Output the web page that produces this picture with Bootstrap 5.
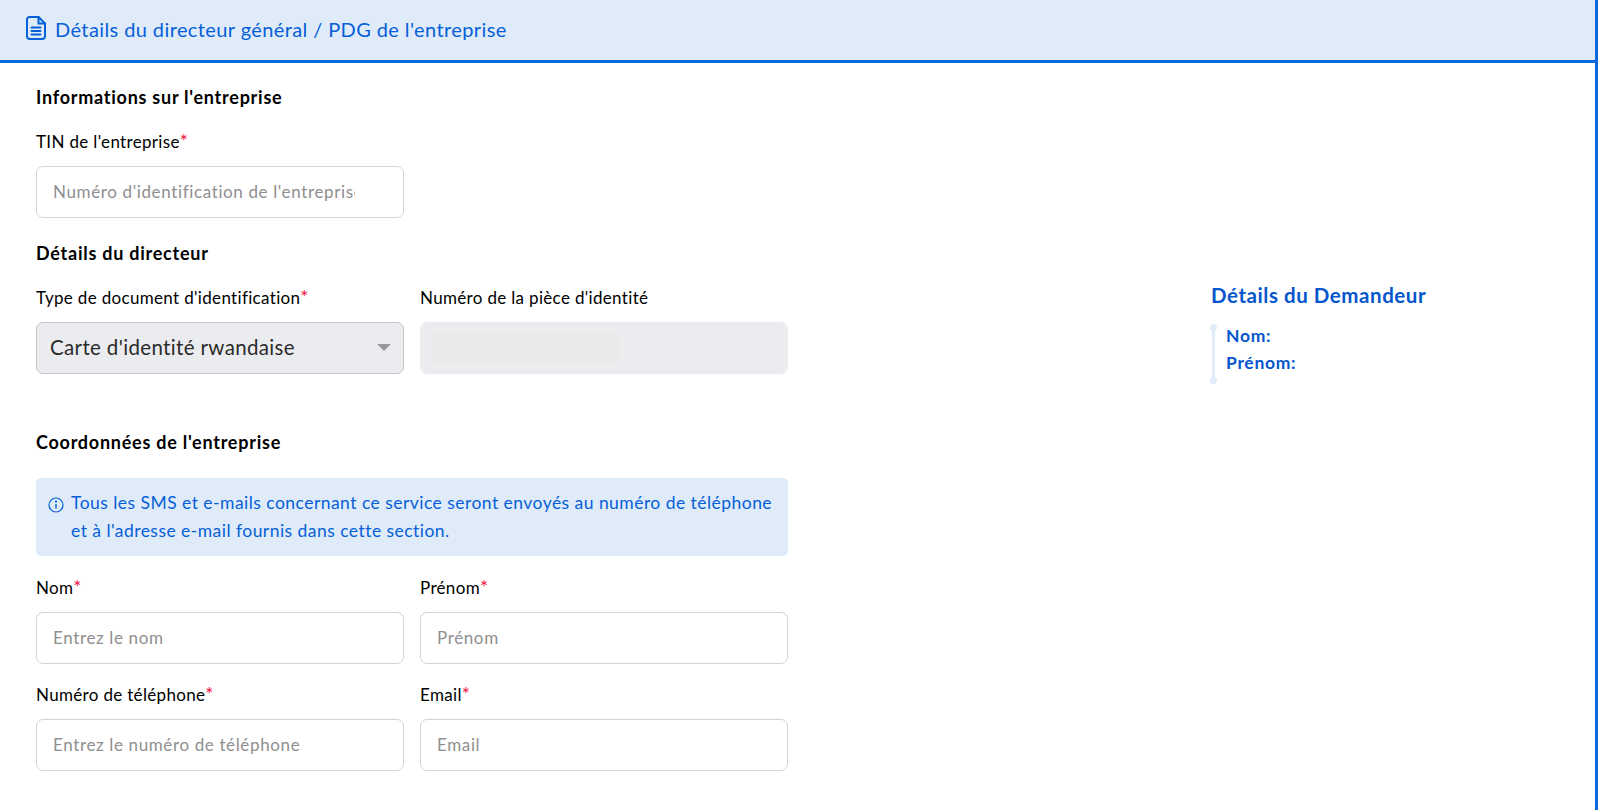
<!DOCTYPE html>
<html lang="fr">
<head>
<meta charset="utf-8">
<title>Détails du directeur</title>
<link rel="stylesheet" href="https://cdn.jsdelivr.net/npm/bootstrap@5.3.0/dist/css/bootstrap.min.css">
<style>
html,body{height:100%;}
body{font-family:"Lato","Noto Sans",sans-serif;color:#000;background:#fff;overflow:hidden;}
.shell{height:810px;width:1598px;border-right:3px solid #0b68dd;background:#fff;}
.head-bar{height:63px;background:#dfebf8;border-bottom:3px solid #0b68dd;padding:0 0 3px 26px;color:#0560d8;font-size:20px;letter-spacing:.4px;gap:9px;}
.head-bar svg{margin-bottom:2px;}
.form-side{width:788px;padding:22px 0 0 36px;}
.sect-title{font-size:18px;font-weight:700;line-height:24px;margin:0;color:#000;letter-spacing:.75px;}
.fld-label{font-size:17px;line-height:24px;margin:0 0 12px;color:#000;letter-spacing:.33px;}
.req{color:#f0113f;font-size:19px;line-height:1;}
.grid-2{display:grid;grid-template-columns:368px 368px;column-gap:16px;}
.fld-input.form-control,.fld-input.form-select{height:52px;border:1px solid #cfd4dc;border-radius:7px;font-size:17px;letter-spacing:.63px;padding:0 16px 2px;color:#212529;}
.fld-input.form-control::placeholder{color:#8f8f8f;opacity:1;}
.clip-end.form-control{padding-right:48px;}
.fld-input.form-select{background-color:#ebecef;border-color:#c4c6ca;font-size:20.5px;letter-spacing:.35px;padding-left:13px;color:#2b2b2b;opacity:1;background-image:none;}
.caret-mark{right:13px;top:22px;width:0;height:0;border-left:7px solid transparent;border-right:7px solid transparent;border-top:7px solid #999;}
.fld-input.form-control:disabled{background:#ebecef;border-color:#ebecef;}
.redact{left:10px;top:10px;width:190px;height:32px;background:#eaeaea;}
.note-box{height:78px;background:#dfebf8;border-radius:5px;color:#0560d8;font-size:17.5px;letter-spacing:.46px;line-height:28px;padding:11px 12px;gap:7px;margin:0;border:0;}
.note-box svg{margin-top:8px;flex:none;}
.s1{margin-top:21px;}
.s2{margin-top:23px;}
.s3{margin-top:40px;}
.s4{margin-top:24px;}
.s5{margin-top:20px;}
.s6{margin-top:19px;}
.aside-side{margin-left:423px;padding-top:219px;}
.aside-title{font-size:20.5px;font-weight:700;line-height:26px;color:#0556cc;margin:0;letter-spacing:.55px;white-space:nowrap;}
.tl{margin-top:14px;margin-left:1px;padding:0 0 6px 14px;border:0;}
.tl::before{content:"";position:absolute;left:0;top:5px;bottom:1px;width:3px;background:#e0ecf9;}
.dot{position:absolute;left:-2px;width:7px;height:7px;border-radius:50%;background:#e0ecf9;}
.dot-a{top:2px;}
.dot-b{bottom:-2px;}
.tl-row{font-size:17.5px;font-weight:700;line-height:27px;color:#0556cc;letter-spacing:.7px;}
</style>
</head>
<body>
<div class="shell">
  <div class="head-bar d-flex align-items-center">
    <svg width="20" height="24" viewBox="0 0 20 24" fill="none" stroke="#0560d8" stroke-width="2" stroke-linejoin="round" stroke-linecap="round"><path d="M3.500 1h9L19 7.500V20a3 3 0 0 1-3 3H4a3 3 0 0 1-3-3V3.500A2.500 2.500 0 0 1 3.500 1z"/><path d="M12.500 1v6.500H19"/><path d="M5.500 11.500h9M5.500 15h9M5.500 18.500h9"/></svg>
    <span>Détails du directeur général / PDG de l'entreprise</span>
  </div>
  <div class="d-flex">
    <form class="form-side">
      <h6 class="sect-title">Informations sur l'entreprise</h6>
      <div class="grid-2 s1">
        <div>
          <label class="fld-label d-block">TIN de l'entreprise<span class="req">*</span></label>
          <input class="form-control fld-input clip-end" placeholder="Numéro d'identification de l'entreprise">
        </div>
      </div>
      <h6 class="sect-title s2">Détails du directeur</h6>
      <div class="grid-2 s1">
        <div>
          <label class="fld-label d-block">Type de document d'identification<span class="req">*</span></label>
          <div class="position-relative">
            <select class="form-select fld-input" disabled><option>Carte d'identité rwandaise</option></select>
            <span class="caret-mark position-absolute"></span>
          </div>
        </div>
        <div>
          <label class="fld-label d-block">Numéro de la pièce d'identité</label>
          <div class="position-relative">
            <input class="form-control fld-input" disabled>
            <span class="redact position-absolute"></span>
          </div>
        </div>
      </div>
      <h6 class="sect-title s3 pt-3">Coordonnées de l'entreprise</h6>
      <div class="note-box alert d-flex s4">
        <svg width="16" height="16" viewBox="0 0 16 16" fill="none" stroke="#0560d8" stroke-width="1.200"><circle cx="8" cy="8" r="7"/><path d="M8 7v4.500" stroke-width="1.400"/><circle cx="8" cy="4.700" r=".5"/></svg>
        <div>Tous les SMS et e-mails concernant ce service seront envoyés au numéro de téléphone<br>et à l'adresse e-mail fournis dans cette section.</div>
      </div>
      <div class="grid-2 s5">
        <div>
          <label class="fld-label d-block">Nom<span class="req">*</span></label>
          <input class="form-control fld-input" placeholder="Entrez le nom">
        </div>
        <div>
          <label class="fld-label d-block">Prénom<span class="req">*</span></label>
          <input class="form-control fld-input" placeholder="Prénom">
        </div>
      </div>
      <div class="grid-2 s6">
        <div>
          <label class="fld-label d-block">Numéro de téléphone<span class="req">*</span></label>
          <input class="form-control fld-input" placeholder="Entrez le numéro de téléphone">
        </div>
        <div>
          <label class="fld-label d-block">Email<span class="req">*</span></label>
          <input class="form-control fld-input" placeholder="Email">
        </div>
      </div>
    </form>
    <aside class="aside-side">
      <h5 class="aside-title">Détails du Demandeur</h5>
      <div class="tl position-relative">
        <span class="dot dot-a"></span>
        <div class="tl-row">Nom:</div>
        <div class="tl-row">Prénom:</div>
        <span class="dot dot-b"></span>
      </div>
    </aside>
  </div>
</div>
<script src="https://cdn.jsdelivr.net/npm/bootstrap@5.3.0/dist/js/bootstrap.bundle.min.js"></script>
</body>
</html>
